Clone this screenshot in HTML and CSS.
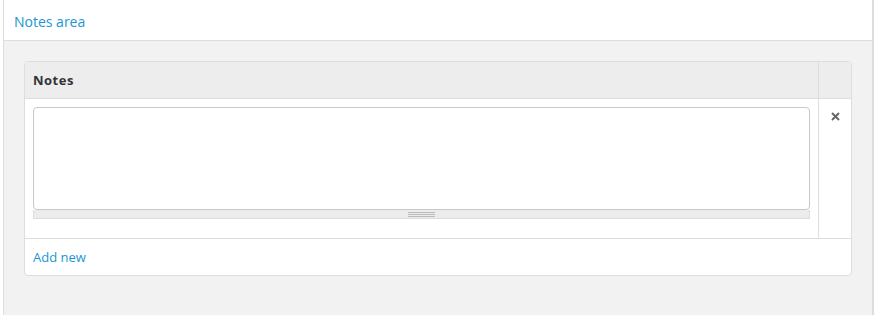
FILE: index.html
```html
<!DOCTYPE html>
<html>
<head>
<meta charset="utf-8">
<link rel="stylesheet" href="styles.css">
</head>
<body>
<div class="area">
  <div class="area-head"><a class="link title">Notes area</a></div>
  <div class="area-body">
    <div class="panel">
      <div class="row head">
        <div class="cell main">Notes</div>
        <div class="cell side"></div>
      </div>
      <div class="row body">
        <div class="cell main">
          <div class="ta-wrap">
            <textarea class="ta"></textarea>
            <div class="grip"><span class="grip-lines"></span></div>
          </div>
        </div>
        <div class="cell side">
          <svg class="close" width="9" height="9" viewBox="0 0 9 9"><path d="M1 1 L8 8 M8 1 L1 8" stroke="#666" stroke-width="2" fill="none"/></svg>
        </div>
      </div>
      <div class="foot"><a class="link add">Add new</a></div>
    </div>
  </div>
</div>
</body>
</html>
```
FILE: styles.css
```css
* { box-sizing: border-box; }
html, body { margin: 0; padding: 0; background: #fff; }
body { font-family: "Open Sans", "DejaVu Sans", sans-serif; color: #333; }
.area {
  margin-left: 3px;
  width: 871px;
  height: 315px;
  border-left: 1px solid #ddd;
  border-right: 2px solid #ddd;
  display: flex;
  flex-direction: column;
}
.area-head {
  height: 41px;
  padding: 10px 10px 0 10px;
  background: #fff;
  border-bottom: 1px solid #ddd;
}
.link { color: #1a96d4; text-decoration: none; }
.title { font-size: 14px; line-height: 20px; }
.area-body {
  flex: 1;
  background: #f2f2f2;
  padding: 20px 20px 0 20px;
}
.panel {
  width: 828px;
  background: #fff;
  border: 1px solid #ddd;
  border-radius: 4px;
  overflow: hidden;
}
.row { display: flex; border-bottom: 1px solid #ddd; }
.head { height: 37px; background: #ededed; }
.head .main { font-weight: bold; font-size: 13px; letter-spacing: 0.5px; padding: 9px 8px 0 8px; line-height: 18px; color: #333; }
.cell.main { flex: 1; border-right: 1px solid #ddd; }
.cell.side { width: 32px; display: flex; justify-content: center; align-items: flex-start; }
.body { height: 140px; }
.body .main { padding: 8px 8px 0 8px; }
.ta-wrap { width: 777px; }
.ta {
  display: block;
  width: 777px;
  height: 103px;
  border: 1px solid #c8c8c8;
  border-radius: 4px;
  resize: none;
  margin: 0;
  outline: none;
  background: #fff;
}
.grip {
  height: 9px;
  background: #ececec;
  border: 1px solid #ddd;
  border-top: none;
  display: flex;
  justify-content: center;
  align-items: center;
}
.grip-lines {
  width: 27px;
  height: 5px;
  border-top: 1px solid #bbb;
  border-bottom: 1px solid #bbb;
}
.grip-lines::after {
  content: "";
  display: block;
  height: 1px;
  margin-top: 1px;
  background: #bbb;
}
.close { display: block; margin-top: 13px; margin-left: 1px; }
.foot { height: 36px; padding: 6px 8px 0 8px; }
.add { font-size: 13px; line-height: 18px; }
```
